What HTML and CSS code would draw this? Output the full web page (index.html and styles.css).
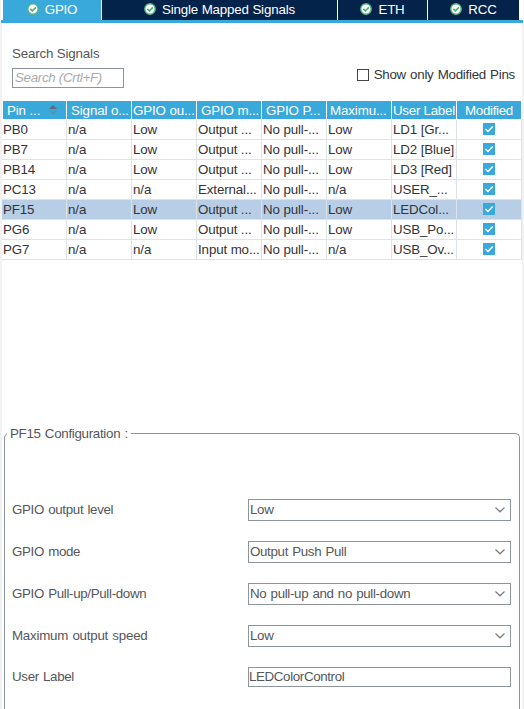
FILE: index.html
```html
<!DOCTYPE html>
<html lang="en">
<head>
<meta charset="utf-8">
<title>GPIO Configuration</title>
<link rel="stylesheet" href="styles.css">
</head>
<body>
<svg class="defs" width="0" height="0">
  <symbol id="ok" viewBox="0 0 12 12"><circle cx="6" cy="6" r="5.2" fill="#fff" stroke="#55b580" stroke-width="1.4"/><path d="M3.3 5.8 5.4 7.8 8.9 4.4" fill="none" stroke="#4bae78" stroke-width="1.6"/></symbol>
  <symbol id="chev" viewBox="0 0 10 6"><path d="M.5.5 5 4.8 9.5.5" fill="none" stroke="#777b7f" stroke-width="1.2"/></symbol>
  <symbol id="box" viewBox="0 0 12 12"><rect width="12" height="12" fill="#39a9dc"/><path d="M2.5 6 5 8.5 9.7 3.5" fill="none" stroke="#fff" stroke-width="1.4"/></symbol>
</svg>
<main class="panel">
  <nav class="tabs">
    <div class="tab active"><svg><use href="#ok"/></svg><span>GPIO</span></div>
    <div class="tab wide"><svg><use href="#ok"/></svg><span>Single Mapped Signals</span></div>
    <div class="tab"><svg><use href="#ok"/></svg><span>ETH</span></div>
    <div class="tab"><svg><use href="#ok"/></svg><span>RCC</span></div>
  </nav>
  <section class="search">
    <div><div class="caption">Search Signals</div><div class="query">Search (Crtl+F)</div></div>
    <label class="only"><i></i><span>Show only Modified Pins</span></label>
  </section>
  <section class="table">
    <div class="row head"><div class="pin">Pin ...<svg viewBox="0 0 8 10"><path d="M0 4 4 0 8 4Z" fill="#626b72"/><path d="M0 6H8L4 10Z" fill="#5393b5"/></svg></div><div>Signal o...</div><div>GPIO ou...</div><div>GPIO m...</div><div>GPIO P...</div><div>Maximu...</div><div>User Label</div><div class="mod">Modified</div></div>
    <div class="row"><div>PB0</div><div>n/a</div><div>Low</div><div>Output ...</div><div>No pull-...</div><div>Low</div><div>LD1 [Gr...</div><div class="check"><svg><use href="#box"/></svg></div></div>
    <div class="row"><div>PB7</div><div>n/a</div><div>Low</div><div>Output ...</div><div>No pull-...</div><div>Low</div><div>LD2 [Blue]</div><div class="check"><svg><use href="#box"/></svg></div></div>
    <div class="row"><div>PB14</div><div>n/a</div><div>Low</div><div>Output ...</div><div>No pull-...</div><div>Low</div><div>LD3 [Red]</div><div class="check"><svg><use href="#box"/></svg></div></div>
    <div class="row"><div>PC13</div><div>n/a</div><div>n/a</div><div>External...</div><div>No pull-...</div><div>n/a</div><div>USER_...</div><div class="check"><svg><use href="#box"/></svg></div></div>
    <div class="row selected"><div>PF15</div><div>n/a</div><div>Low</div><div>Output ...</div><div>No pull-...</div><div>Low</div><div>LEDCol...</div><div class="check"><svg><use href="#box"/></svg></div></div>
    <div class="row"><div>PG6</div><div>n/a</div><div>Low</div><div>Output ...</div><div>No pull-...</div><div>Low</div><div>USB_Po...</div><div class="check"><svg><use href="#box"/></svg></div></div>
    <div class="row"><div>PG7</div><div>n/a</div><div>n/a</div><div>Input mo...</div><div>No pull-...</div><div>n/a</div><div>USB_Ov...</div><div class="check"><svg><use href="#box"/></svg></div></div>
  </section>
  <section class="config">
    <h2>PF15 Configuration :</h2>
    <div class="field"><span>GPIO output level</span><div class="combo">Low<svg><use href="#chev"/></svg></div></div>
    <div class="field"><span>GPIO mode</span><div class="combo">Output Push Pull<svg><use href="#chev"/></svg></div></div>
    <div class="field"><span>GPIO Pull-up/Pull-down</span><div class="combo">No pull-up and no pull-down<svg><use href="#chev"/></svg></div></div>
    <div class="field"><span class="loose">Maximum output speed</span><div class="combo">Low<svg><use href="#chev"/></svg></div></div>
    <div class="field"><span>User Label</span><div class="combo text">LEDColorControl</div></div>
  </section>
</main>
</body>
</html>
```
FILE: styles.css
```css
* { box-sizing: border-box; }
body { margin: 0; height: 709px; overflow: hidden; background: #f2f2f3; font: 13.33px/16px "Liberation Sans", Arial, sans-serif; letter-spacing: -.16px; color: #55565a; white-space: nowrap; }
.defs { position: absolute; }
.panel { width: 520px; height: 709px; margin-left: 2px; background: #fff; display: flex; flex-direction: column; }
.tabs { display: grid; grid-template-columns: 98px 235px 89px 91px; gap: 1px; height: 23px; margin: 0 -1px; padding-left: 2px; background: #fff; border-bottom: 3px solid #39a9dc; flex: none; }
.tab { display: flex; align-items: center; justify-content: center; gap: 6px; background: #03234b; color: #fff; letter-spacing: -.2px; }
.tab span { padding-top: 0; }
.tab.wide { letter-spacing: -.16px; }
.tab.active { background: #39a9dc; }
.tab svg { width: 12px; height: 12px; margin-top: -2px; }
.search { display: flex; justify-content: space-between; height: 78px; padding: 23px 7px 0 10px; flex: none; }
.query { width: 112px; height: 20px; margin-top: 6px; border: 1px solid #8d949b; padding: 1px 2px; font-style: italic; color: #aaa; letter-spacing: -.3px; }
.only { display: flex; align-items: center; gap: 5px; height: 16px; margin-top: 21px; color: #35363a; letter-spacing: -.26px; word-spacing: .7px; }
.only i { width: 12px; height: 12px; border: 1px solid #444; }
.table { height: 159px; flex: none; }
.row { display: grid; grid-template-columns: repeat(8, 65px); height: 20px; color: #333438; letter-spacing: -.12px; }
.row > div { border-right: 1px solid #dfe2e6; border-bottom: 1px solid #dfe2e6; padding: 2px 0 0 1px; overflow: hidden; }
.row.head { height: 19px; color: #fff; }
.row.head > div { border-right-color: #fff; border-bottom-color: #fff; background: #39a9dc; padding-left: 4px; }
.row.head > div:nth-child(3), .row.head > div:nth-child(7) { padding-left: 1px; }
.row.head > div:nth-child(6) { padding-left: 3px; }
.row.head > div:nth-child(7) { letter-spacing: -.26px; }
.row.head > .pin { display: flex; gap: 9px; border-left: 1px solid #fff; }
.pin svg { width: 8px; height: 10px; margin-top: 2px; }
.row.head .mod { padding-left: 8px; letter-spacing: -.3px; }
.row > .check { padding: 3px 0 0 26px; }
.check svg { display: block; width: 12px; height: 12px; }
.selected { background: #b8cee6; }
.config { margin: 173px 2px 0; height: 300px; border: 1px solid #8d949b; border-bottom: 0; border-radius: 5px 5px 0 0; padding: 0 8px 0 7px; flex: none; letter-spacing: -.36px; word-spacing: .8px; }
.config h2 { width: max-content; margin: -8px 0 57px -5px; padding: 0 3px 0 3px; font: inherit; letter-spacing: -.3px; background: #fff; }
.field { display: grid; grid-template-columns: 236px 263px; align-items: center; height: 22px; margin-bottom: 20px; letter-spacing: -.33px; }
.loose { letter-spacing: -.23px; }
.combo { display: flex; align-items: center; justify-content: space-between; height: 22px; border: 1px solid #8d949b; padding: 0 5px 0 1px; }
.combo svg { width: 10px; height: 6px; }
.combo.text { height: 20px; padding-left: 0; letter-spacing: -.36px; }
.field:last-child { height: 20px; }
```
